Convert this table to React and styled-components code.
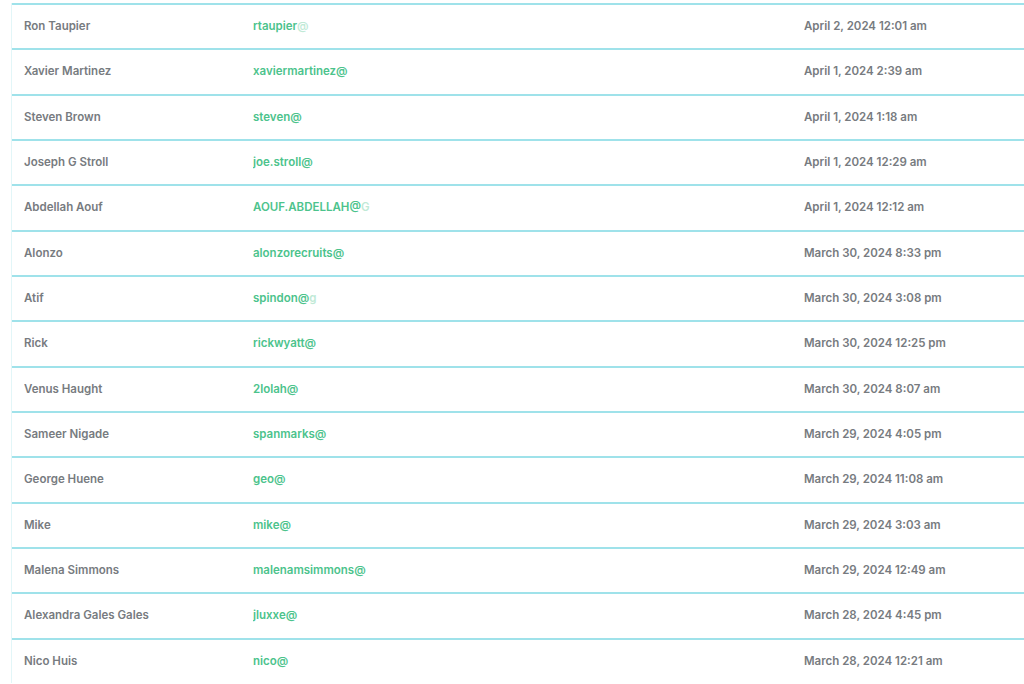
import React from 'react';
import styled, { createGlobalStyle } from 'styled-components';

const GlobalStyle = createGlobalStyle`
  html, body {
    margin: 0;
    padding: 0;
    background: #ffffff;
    overflow: hidden;
  }
  body {
    font-family: Inter, "Open Sans", sans-serif;
  }
`;

const rows = [
  { name: 'Ron Taupier', email: 'rtaupier', tail: '@', date: 'April 2, 2024 12:01 am' },
  { name: 'Xavier Martinez', email: 'xaviermartinez@', tail: '', date: 'April 1, 2024 2:39 am' },
  { name: 'Steven Brown', email: 'steven@', tail: '', date: 'April 1, 2024 1:18 am' },
  { name: 'Joseph G Stroll', email: 'joe.stroll@', tail: '', date: 'April 1, 2024 12:29 am' },
  { name: 'Abdellah Aouf', email: 'AOUF.ABDELLAH@', tail: 'G', date: 'April 1, 2024 12:12 am' },
  { name: 'Alonzo', email: 'alonzorecruits@', tail: '', date: 'March 30, 2024 8:33 pm' },
  { name: 'Atif', email: 'spindon@', tail: 'g', date: 'March 30, 2024 3:08 pm' },
  { name: 'Rick', email: 'rickwyatt@', tail: '', date: 'March 30, 2024 12:25 pm' },
  { name: 'Venus Haught', email: '2lolah@', tail: '', date: 'March 30, 2024 8:07 am' },
  { name: 'Sameer Nigade', email: 'spanmarks@', tail: '', date: 'March 29, 2024 4:05 pm' },
  { name: 'George Huene', email: 'geo@', tail: '', date: 'March 29, 2024 11:08 am' },
  { name: 'Mike', email: 'mike@', tail: '', date: 'March 29, 2024 3:03 am' },
  { name: 'Malena Simmons', email: 'malenamsimmons@', tail: '', date: 'March 29, 2024 12:49 am' },
  { name: 'Alexandra Gales Gales', email: 'jluxxe@', tail: '', date: 'March 28, 2024 4:45 pm' },
  { name: 'Nico Huis', email: 'nico@', tail: '', date: 'March 28, 2024 12:21 am' },
];

const Page = styled.div`
  padding: 3px 0 0 11px;
  width: 1030px;
`;

const Table = styled.div`
  border-left: 1px solid #e2f6f8;
`;

const Row = styled.div`
  display: grid;
  grid-template-columns: 229px 551px 1fr;
  align-items: center;
  height: 45.33px;
  box-sizing: border-box;
  border-top: 2px solid #9fe2ea;
  padding-left: 12px;
`;

const Cell = styled.div`
  font-size: 11.5px;
  font-weight: 600;
  color: ${p => (p.$accent ? '#4cc38c' : '#777b80')};
  white-space: nowrap;
  overflow: hidden;
  padding-bottom: 1px;
`;

const Faded = styled.span`
  opacity: 0.35;
`;

export default function App() {
  return (
    <>
      <GlobalStyle />
      <Page>
        <Table>
          {rows.map(r => (
            <Row key={r.name}>
              <Cell>{r.name}</Cell>
              <Cell $accent>
                {r.email}
                {r.tail && <Faded>{r.tail}</Faded>}
              </Cell>
              <Cell>{r.date}</Cell>
            </Row>
          ))}
        </Table>
      </Page>
    </>
  );
}
